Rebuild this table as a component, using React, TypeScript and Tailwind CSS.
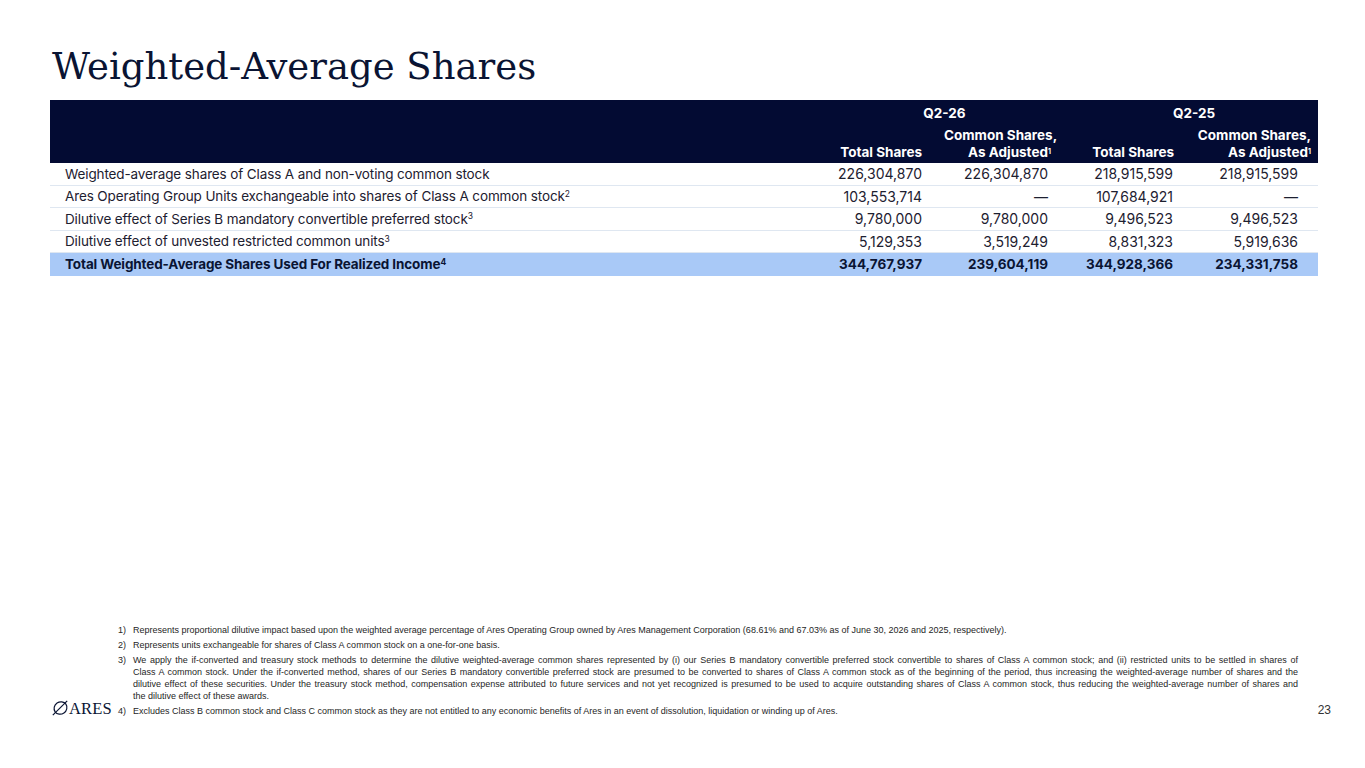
import React from 'react';

type Row = {
  label: string;
  sup?: string;
  values: string[];
  total?: boolean;
};

const rows: Row[] = [
  {
    label: 'Weighted-average shares of Class A and non-voting common stock',
    values: ['226,304,870', '226,304,870', '218,915,599', '218,915,599'],
  },
  {
    label: 'Ares Operating Group Units exchangeable into shares of Class A common stock',
    sup: '2',
    values: ['103,553,714', '—', '107,684,921', '—'],
  },
  {
    label: 'Dilutive effect of Series B mandatory convertible preferred stock',
    sup: '3',
    values: ['9,780,000', '9,780,000', '9,496,523', '9,496,523'],
  },
  {
    label: 'Dilutive effect of unvested restricted common units',
    sup: '3',
    values: ['5,129,353', '3,519,249', '8,831,323', '5,919,636'],
  },
  {
    label: 'Total Weighted-Average Shares Used For Realized Income',
    sup: '4',
    values: ['344,767,937', '239,604,119', '344,928,366', '234,331,758'],
    total: true,
  },
];

// label column + four numeric columns
const cols = 'grid grid-cols-[769px_125px_126px_125px_123px]';

function AresLogo() {
  return (
    <div className="flex items-end gap-[1px] text-[#0a1433]">
      <svg width="16" height="16" viewBox="0 0 16 16" fill="none" stroke="currentColor" strokeWidth="1.2">
        <ellipse cx="8.5" cy="8" rx="6.6" ry="6" transform="rotate(-35 8.5 8)" />
        <path d="M0.8 15.2 L15.2 0.8" />
      </svg>
      <span className="font-['Liberation_Serif',serif] text-[16.5px] leading-[14px] tracking-[0.2px]">ARES</span>
    </div>
  );
}

function Note({ n, children }: { n: string; children: React.ReactNode }) {
  return (
    <div className="flex">
      <span className="w-[15px] shrink-0">{n}</span>
      <div className="flex-1">{children}</div>
    </div>
  );
}

export default function App() {
  return (
    <div className="relative w-[1365px] h-[768px] bg-white overflow-hidden flex flex-col font-['Inter',sans-serif]">
      <h1 className="ml-[52px] mt-[42px] h-[58px] font-['DejaVu_Serif',serif] text-[37px] leading-[50px] text-[#0a1433]">
        Weighted-Average Shares
      </h1>

      <div className="ml-[50px] w-[1268px]">
        {/* header */}
        <div className="bg-[#030b33] text-white font-bold text-[13.5px] whitespace-nowrap">
          <div className={`${cols} h-[25px] items-center`}>
            <div />
            <div className="col-span-2 text-center pt-[2px]">Q2-26</div>
            <div className="col-span-2 text-center pt-[2px]">Q2-25</div>
          </div>
          <div className={`${cols} h-[38px] items-end pb-[2px] leading-[17px]`}>
            <div />
            <div className="text-right pr-[22px]">Total Shares</div>
            <div className="text-right pr-[19px]">
              Common Shares,
              <br />
              As Adjusted<sup className="text-[7px]">1</sup>
            </div>
            <div className="text-right pr-[21px]">Total Shares</div>
            <div className="text-right pr-[7px]">
              Common Shares,
              <br />
              As Adjusted<sup className="text-[7px]">1</sup>
            </div>
          </div>
        </div>

        {/* body */}
        {rows.map((r) => (
          <div
            key={r.label}
            className={
              r.total
                ? `${cols} h-[23px] items-center bg-[#a9c9f7] text-[#0a1433] font-bold text-[13.5px]`
                : `${cols} h-[22.5px] items-center border-b border-[#dfe7f1] text-[#1d2030] text-[14px]`
            }
          >
            <div className="pl-[15px] whitespace-nowrap text-[13.5px] tracking-[-0.12px]">
              {r.label}
              {r.sup && <sup className="text-[8.5px]">{r.sup}</sup>}
            </div>
            {r.values.map((v, i) => (
              <div key={i} className={i === 3 ? 'text-right pr-[20px]' : 'text-right pr-[22px]'}>
                {v}
              </div>
            ))}
          </div>
        ))}
      </div>

      <div className="flex-1" />

      {/* footnotes + footer */}
      <div className="flex items-end mb-[51px] pl-[52px] pr-[34px]">
        <div className="w-[66px] shrink-0 pb-[1px]">
          <AresLogo />
        </div>
        <div className="flex-1 font-['Liberation_Sans',Arial,sans-serif] text-[9px] leading-[12px] text-[#262626] flex flex-col gap-[3px]">
          <Note n="1)">
            Represents proportional dilutive impact based upon the weighted average percentage of Ares Operating Group owned by Ares Management Corporation (68.61% and 67.03% as of June 30, 2026 and 2025, respectively).
          </Note>
          <Note n="2)">Represents units exchangeable for shares of Class A common stock on a one-for-one basis.</Note>
          <Note n="3)">
            <div className="text-justify [text-align-last:justify]">
              We apply the if-converted and treasury stock methods to determine the dilutive weighted-average common shares represented by (i) our Series B mandatory convertible preferred stock convertible to shares of Class A common stock; and (ii) restricted units to be settled in shares of
            </div>
            <div className="text-justify [text-align-last:justify]">
              Class A common stock. Under the if-converted method, shares of our Series B mandatory convertible preferred stock are presumed to be converted to shares of Class A common stock as of the beginning of the period, thus increasing the weighted-average number of shares and the
            </div>
            <div className="text-justify [text-align-last:justify]">
              dilutive effect of these securities. Under the treasury stock method, compensation expense attributed to future services and not yet recognized is presumed to be used to acquire outstanding shares of Class A common stock, thus reducing the weighted-average number of shares and
            </div>
            <div>the dilutive effect of these awards.</div>
          </Note>
          <Note n="4)">
            Excludes Class B common stock and Class C common stock as they are not entitled to any economic benefits of Ares in an event of dissolution, liquidation or winding up of Ares.
          </Note>
        </div>
        <div className="w-[33px] shrink-0 text-right font-['Liberation_Sans',Arial,sans-serif] text-[12px] leading-[14px] text-[#333]">
          23
        </div>
      </div>
    </div>
  );
}
